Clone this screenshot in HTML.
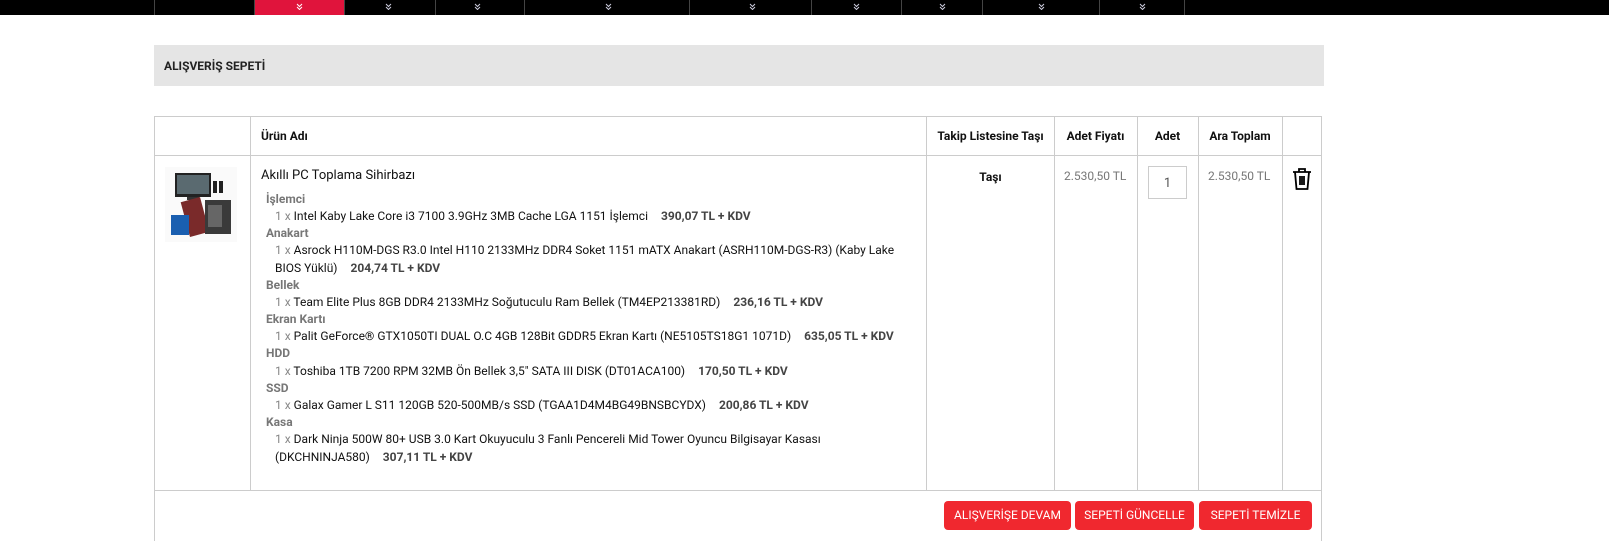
<!DOCTYPE html>
<html><head><meta charset="utf-8"><style>
*{box-sizing:border-box;margin:0;padding:0}
body{width:1609px;height:541px;overflow:hidden;background:#fff;font-family:"Roboto","Liberation Sans",sans-serif;font-size:12px;color:#111;position:relative}
.nav{position:absolute;left:0;top:0;width:1609px;height:15px;background:#000}
.nav i{position:absolute;top:0;height:15px;width:1px;background:#444}
.nav svg{position:absolute;top:3px}
.red{position:absolute;left:254px;top:0;width:90px;height:15px;background:#e0143c}
.bar{position:absolute;left:154px;top:45px;width:1170px;height:41px;background:#e5e5e5;font-weight:bold;font-size:12px;padding:14px 10px;color:#222}
.ln{position:absolute;background:#ccc}
.t{position:absolute;white-space:nowrap}
.h{font-weight:bold;font-size:12px;top:129px}
.g{color:#777}
.cat{color:#777;font-weight:bold;left:266px}
.it{left:275px}
.it span.q{color:#888}
.p{font-weight:bold;color:#444;margin-left:10px}
.btn{position:absolute;top:501px;height:29px;background:#f0282f;border-radius:4px;color:#fff;font-size:12px;text-align:center;line-height:29px}
</style></head><body>
<div class="nav"><div class="red"></div>
<i style="left:154px"></i><i style="left:254px"></i><i style="left:344px"></i><i style="left:435px"></i><i style="left:524px"></i><i style="left:689px"></i><i style="left:811px"></i><i style="left:901px"></i><i style="left:982px"></i><i style="left:1099px"></i><i style="left:1184px"></i>
<svg style="left:296px" width="7" height="7" viewBox="0 0 7 7" fill="none" stroke="#fff" stroke-width="1"><path d="M1 1l2.5 2.5L6 1M1 4l2.5 2.5L6 4"/></svg>
<svg style="left:385px" width="7" height="7" viewBox="0 0 7 7" fill="none" stroke="#ccd" stroke-width="1"><path d="M1 1l2.5 2.5L6 1M1 4l2.5 2.5L6 4"/></svg>
<svg style="left:474px" width="7" height="7" viewBox="0 0 7 7" fill="none" stroke="#ccd" stroke-width="1"><path d="M1 1l2.5 2.5L6 1M1 4l2.5 2.5L6 4"/></svg>
<svg style="left:605px" width="7" height="7" viewBox="0 0 7 7" fill="none" stroke="#ccd" stroke-width="1"><path d="M1 1l2.5 2.5L6 1M1 4l2.5 2.5L6 4"/></svg>
<svg style="left:749px" width="7" height="7" viewBox="0 0 7 7" fill="none" stroke="#ccd" stroke-width="1"><path d="M1 1l2.5 2.5L6 1M1 4l2.5 2.5L6 4"/></svg>
<svg style="left:853px" width="7" height="7" viewBox="0 0 7 7" fill="none" stroke="#ccd" stroke-width="1"><path d="M1 1l2.5 2.5L6 1M1 4l2.5 2.5L6 4"/></svg>
<svg style="left:939px" width="7" height="7" viewBox="0 0 7 7" fill="none" stroke="#ccd" stroke-width="1"><path d="M1 1l2.5 2.5L6 1M1 4l2.5 2.5L6 4"/></svg>
<svg style="left:1038px" width="7" height="7" viewBox="0 0 7 7" fill="none" stroke="#ccd" stroke-width="1"><path d="M1 1l2.5 2.5L6 1M1 4l2.5 2.5L6 4"/></svg>
<svg style="left:1139px" width="7" height="7" viewBox="0 0 7 7" fill="none" stroke="#ccd" stroke-width="1"><path d="M1 1l2.5 2.5L6 1M1 4l2.5 2.5L6 4"/></svg>
</div>
<div class="bar">ALIŞVERİŞ SEPETİ</div>
<div class="ln" style="left:154px;top:116px;width:1168px;height:1px"></div>
<div class="ln" style="left:154px;top:155px;width:1168px;height:1px"></div>
<div class="ln" style="left:154px;top:490px;width:1168px;height:1px"></div>
<div class="ln" style="left:154px;top:116px;width:1px;height:425px"></div>
<div class="ln" style="left:1321px;top:116px;width:1px;height:425px"></div>
<div class="ln" style="left:250px;top:116px;width:1px;height:374px"></div>
<div class="ln" style="left:926px;top:116px;width:1px;height:374px"></div>
<div class="ln" style="left:1054px;top:116px;width:1px;height:374px"></div>
<div class="ln" style="left:1137px;top:116px;width:1px;height:374px"></div>
<div class="ln" style="left:1198px;top:116px;width:1px;height:374px"></div>
<div class="ln" style="left:1282px;top:116px;width:1px;height:374px"></div>
<div class="t h" style="left:261px">Ürün Adı</div>
<div class="t h" style="left:927px;width:127px;text-align:center">Takip Listesine Taşı</div>
<div class="t h" style="left:1054px;width:83px;text-align:center">Adet Fiyatı</div>
<div class="t h" style="left:1137px;width:61px;text-align:center">Adet</div>
<div class="t h" style="left:1198px;width:84px;text-align:center">Ara Toplam</div>
<svg style="position:absolute;left:165px;top:167px" width="72" height="75" viewBox="0 0 72 75">
<rect width="72" height="75" fill="#fafafa"/>
<rect x="10" y="6" width="36" height="24" fill="#222"/><rect x="12" y="8" width="32" height="19" fill="#5a6a70"/><rect x="22" y="30" width="12" height="3" fill="#333"/>
<rect x="48" y="14" width="4" height="12" fill="#222"/><rect x="54" y="14" width="4" height="12" fill="#222"/>
<rect x="20" y="32" width="20" height="36" fill="#7a2a2a" transform="rotate(-15 30 50)"/>
<rect x="40" y="33" width="26" height="34" fill="#3a3a3a"/><rect x="43" y="38" width="14" height="22" fill="#666"/>
<rect x="6" y="48" width="18" height="20" fill="#1a5fb0"/>
</svg>
<div class="t" style="left:261px;top:168px;font-size:13px">Akıllı PC Toplama Sihirbazı</div>
<div class="t cat" style="top:192px">İşlemci</div>
<div class="t it" style="top:209px"><span class="q">1 x</span> Intel Kaby Lake Core i3 7100 3.9GHz 3MB Cache LGA 1151 İşlemci <span class="p">390,07 TL + KDV</span></div>
<div class="t cat" style="top:226px">Anakart</div>
<div class="t it" style="top:243px"><span class="q">1 x</span> Asrock H110M-DGS R3.0 Intel H110 2133MHz DDR4 Soket 1151 mATX Anakart (ASRH110M-DGS-R3) (Kaby Lake</div>
<div class="t it" style="top:261px">BIOS Yüklü) <span class="p">204,74 TL + KDV</span></div>
<div class="t cat" style="top:278px">Bellek</div>
<div class="t it" style="top:295px"><span class="q">1 x</span> Team Elite Plus 8GB DDR4 2133MHz Soğutuculu Ram Bellek (TM4EP213381RD) <span class="p">236,16 TL + KDV</span></div>
<div class="t cat" style="top:312px">Ekran Kartı</div>
<div class="t it" style="top:329px"><span class="q">1 x</span> Palit GeForce® GTX1050TI DUAL O.C 4GB 128Bit GDDR5 Ekran Kartı (NE5105TS18G1 1071D) <span class="p">635,05 TL + KDV</span></div>
<div class="t cat" style="top:346px">HDD</div>
<div class="t it" style="top:364px"><span class="q">1 x</span> Toshiba 1TB 7200 RPM 32MB Ön Bellek 3,5" SATA III DISK (DT01ACA100) <span class="p">170,50 TL + KDV</span></div>
<div class="t cat" style="top:381px">SSD</div>
<div class="t it" style="top:398px"><span class="q">1 x</span> Galax Gamer L S11 120GB 520-500MB/s SSD (TGAA1D4M4BG49BNSBCYDX) <span class="p">200,86 TL + KDV</span></div>
<div class="t cat" style="top:415px">Kasa</div>
<div class="t it" style="top:432px"><span class="q">1 x</span> Dark Ninja 500W 80+ USB 3.0 Kart Okuyuculu 3 Fanlı Pencereli Mid Tower Oyuncu Bilgisayar Kasası</div>
<div class="t it" style="top:450px">(DKCHNINJA580) <span class="p">307,11 TL + KDV</span></div>
<div class="t" style="left:927px;width:127px;text-align:center;top:170px;font-weight:bold">Taşı</div>
<div class="t g" style="left:1064px;top:169px">2.530,50 TL</div>
<div class="t g" style="left:1208px;top:169px">2.530,50 TL</div>
<div style="position:absolute;left:1148px;top:166px;width:39px;height:33px;border:1px solid #ccc;text-align:center;line-height:33px;font-size:13px;color:#555">1</div>
<svg style="position:absolute;left:1292px;top:168px" width="20" height="22" viewBox="0 0 20 22" fill="none" stroke="#000">
<path d="M1 4h18M7 4V1h6v3M3 4l1.5 17h11L17 4M8 8v9M10 8v9M12 8v9" stroke-width="1.8"/>
</svg>
<div class="btn" style="left:944px;width:127px">ALIŞVERİŞE DEVAM</div>
<div class="btn" style="left:1075px;width:119px">SEPETİ GÜNCELLE</div>
<div class="btn" style="left:1199px;width:113px">SEPETİ TEMİZLE</div>
</body></html>
